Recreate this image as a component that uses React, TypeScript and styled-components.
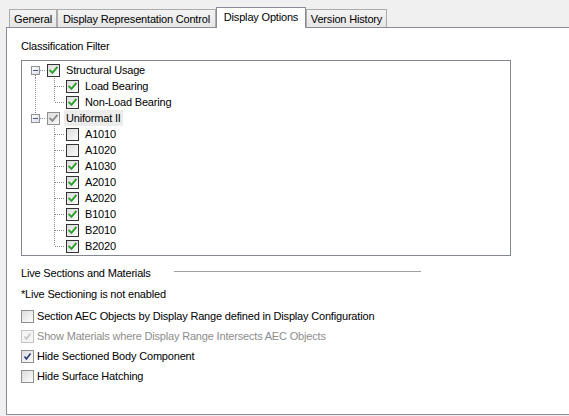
import React from 'react'
import styled, { createGlobalStyle } from 'styled-components'

const GlobalStyle = createGlobalStyle`
  html, body {
    margin: 0;
    padding: 0;
    background: #f0f0f0;
  }
  body {
    font-family: 'Liberation Sans', Arial, sans-serif;
    font-size: 11px;
    letter-spacing: -0.18px;
    color: #000;
  }
`

type TreeNode = {
  label: string
  level: number
  checked: boolean
  mixed?: boolean
  expander?: boolean
  selected?: boolean
  // which ancestor columns keep a vertical line going through this row
  rails: boolean[]
  first?: boolean
  last?: boolean
}

const tree: TreeNode[] = [
  { label: 'Structural Usage', level: 0, checked: true, expander: true, rails: [], first: true },
  { label: 'Load Bearing', level: 1, checked: true, rails: [true], first: true },
  { label: 'Non-Load Bearing', level: 1, checked: true, rails: [true], last: true },
  { label: 'Uniformat II', level: 0, checked: true, mixed: true, expander: true, selected: true, rails: [], last: true },
  { label: 'A1010', level: 1, checked: false, rails: [false], first: true },
  { label: 'A1020', level: 1, checked: false, rails: [false] },
  { label: 'A1030', level: 1, checked: true, rails: [false] },
  { label: 'A2010', level: 1, checked: true, rails: [false] },
  { label: 'A2020', level: 1, checked: true, rails: [false] },
  { label: 'B1010', level: 1, checked: true, rails: [false] },
  { label: 'B2010', level: 1, checked: true, rails: [false] },
  { label: 'B2020', level: 1, checked: true, rails: [false], last: true },
]

const tabs = [
  { label: 'General', width: 48 },
  { label: 'Display Representation Control', width: 159 },
  { label: 'Display Options', width: 90, active: true },
  { label: 'Version History', width: 81 },
]

const options = [
  { label: 'Section AEC Objects by Display Range defined in Display Configuration', checked: false },
  { label: 'Show Materials where Display Range Intersects AEC Objects', checked: true, disabled: true },
  { label: 'Hide Sectioned Body Component', checked: true },
  { label: 'Hide Surface Hatching', checked: false },
]

const Dots = '#8a8a8a'

const RailCell: React.FC<{ down: boolean; up: boolean; across: boolean; expander?: boolean }> = ({
  down,
  up,
  across,
  expander,
}) => (
  <RailBox>
    <svg width="19" height="16" viewBox="0 0 19 16">
      {up && <line x1="9.5" y1="0" x2="9.5" y2={expander ? 4 : 8} stroke={Dots} strokeDasharray="1 1" />}
      {down && <line x1="9.5" y1={expander ? 13 : 8} x2="9.5" y2="16" stroke={Dots} strokeDasharray="1 1" />}
      {across && (
        <line x1={expander ? 14 : 10} y1="8.5" x2="20" y2="8.5" stroke={Dots} strokeDasharray="1 1" />
      )}
      {expander && (
        <g>
          <rect x="5.5" y="4.5" width="8" height="8" fill="#fff" stroke="#919191" />
          <rect x="6" y="5" width="7" height="7" fill="url(#exp)" />
          <line x1="7" y1="8.5" x2="12" y2="8.5" stroke="#4a5a8a" />
        </g>
      )}
    </svg>
  </RailBox>
)

const TreeCheck: React.FC<{ checked: boolean; mixed?: boolean }> = ({ checked, mixed }) => (
  <TreeBox $mixed={mixed}>
    {checked && (
      <svg width="11" height="11" viewBox="0 0 11 11">
        <path
          d="M2.2 5.6 L4.4 7.8 L8.8 2.6"
          fill="none"
          stroke={mixed ? '#8c8c8c' : '#2ea02e'}
          strokeWidth="2"
          strokeLinecap="square"
        />
      </svg>
    )}
  </TreeBox>
)

const PlainCheck: React.FC<{ checked: boolean; disabled?: boolean }> = ({ checked, disabled }) => (
  <CheckBox $disabled={disabled}>
    {checked && (
      <svg width="11" height="11" viewBox="0 0 11 11">
        <path
          d="M2.5 5.5 L4.5 8 L8.5 2.5"
          fill="none"
          stroke={disabled ? '#c4c4c4' : '#23377a'}
          strokeWidth="1.6"
        />
      </svg>
    )}
  </CheckBox>
)

const App: React.FC = () => {
  return (
    <Frame>
      <GlobalStyle />
      <svg width="0" height="0" style={{ position: 'absolute' }}>
        <defs>
          <linearGradient id="exp" x1="0" y1="0" x2="1" y2="1">
            <stop offset="0" stopColor="#ffffff" />
            <stop offset="1" stopColor="#d8dce6" />
          </linearGradient>
        </defs>
      </svg>
      <TabStrip>
        {tabs.map((t) => (
          <Tab key={t.label} $active={t.active} $width={t.width}>
            {t.label}
          </Tab>
        ))}
      </TabStrip>
      <Panel>
        <Heading>Classification Filter</Heading>
        <TreeView>
          {tree.map((n) => (
            <TreeRow key={n.label}>
              {n.level === 0 ? (
                <RailCell up={!n.first} down={!n.last} across expander={n.expander} />
              ) : (
                <>
                  <RailCell up={n.rails[0]} down={n.rails[0]} across={false} />
                  <RailCell up down={!n.last} across />
                </>
              )}
              <TreeCheck checked={n.checked} mixed={n.mixed} />
              <TreeLabel $selected={n.selected}>{n.label}</TreeLabel>
            </TreeRow>
          ))}
        </TreeView>

        <GroupHeader>
          <span>Live Sections and Materials</span>
          <Rule />
        </GroupHeader>
        <Note>*Live Sectioning is not enabled</Note>
        <Options>
          {options.map((o) => (
            <OptionRow key={o.label} $disabled={o.disabled}>
              <PlainCheck checked={o.checked} disabled={o.disabled} />
              <span>{o.label}</span>
            </OptionRow>
          ))}
        </Options>
      </Panel>
    </Frame>
  )
}

const Frame = styled.div`
  width: 569px;
  height: 416px;
  box-sizing: border-box;
  padding: 7px 0 1px 6px;
  overflow: hidden;
  background: #f0f0f0;
  display: flex;
  flex-direction: column;
`

const TabStrip = styled.div`
  display: flex;
  align-items: flex-end;
  height: 21px;
  padding-left: 3px;
  margin-bottom: -1px;
  position: relative;
  z-index: 1;
`

const Tab = styled.div<{ $active?: boolean; $width: number }>`
  box-sizing: border-box;
  width: ${(p) => p.$width}px;
  height: ${(p) => (p.$active ? 21 : 18)}px;
  margin-bottom: ${(p) => (p.$active ? 0 : 1)}px;
  border: 1px solid ${(p) => (p.$active ? '#898c95' : '#acacac')};
  border-bottom: none;
  background: ${(p) => (p.$active ? '#fff' : 'linear-gradient(#f3f3f3, #e6e6e6)')};
  display: flex;
  align-items: center;
  justify-content: center;
  padding-bottom: ${(p) => (p.$active ? 3 : 0)}px;
  white-space: nowrap;
`

const Panel = styled.div`
  flex: 1;
  margin-right: -20px;
  background: #fff;
  border: 1px solid #898c95;
  padding: 10px 0 0 14px;
  display: flex;
  flex-direction: column;
  align-items: flex-start;
`

const Heading = styled.div`
  line-height: 16px;
`

const TreeView = styled.div`
  box-sizing: border-box;
  width: 490px;
  margin-top: 6px;
  border: 1px solid #828790;
  padding: 1px 0 1px 4px;
  display: flex;
  flex-direction: column;
`

const TreeRow = styled.div`
  display: flex;
  align-items: center;
  height: 16px;
`

const RailBox = styled.div`
  width: 19px;
  height: 16px;
  flex: none;
  svg {
    display: block;
  }
`

const TreeBox = styled.div<{ $mixed?: boolean }>`
  box-sizing: border-box;
  width: 13px;
  height: 13px;
  margin-left: 2px;
  flex: none;
  border: 1px solid ${(p) => (p.$mixed ? '#8e8f8f' : '#333')};
  background: linear-gradient(135deg, #dcdcdc, #fbfbfb);
  svg {
    display: block;
  }
`

const TreeLabel = styled.div<{ $selected?: boolean }>`
  margin-left: 4px;
  padding: 0 2px;
  line-height: 16px;
  background: ${(p) => (p.$selected ? '#ececec' : 'transparent')};
`

const GroupHeader = styled.div`
  width: 400px;
  margin-top: 9px;
  display: flex;
  align-items: center;
  line-height: 16px;
`

const Rule = styled.div`
  flex: 1;
  height: 1px;
  margin: 0 0 0 23px;
  position: relative;
  top: -2px;
  background: #a0a0a0;
`

const Note = styled.div`
  margin-top: 5px;
  line-height: 16px;
`

const Options = styled.div`
  margin-top: 4px;
  display: flex;
  flex-direction: column;
`

const OptionRow = styled.div<{ $disabled?: boolean }>`
  height: 20px;
  display: flex;
  align-items: center;
  gap: 3px;
  color: ${(p) => (p.$disabled ? '#8d8d8d' : '#000')};
`

const CheckBox = styled.div<{ $disabled?: boolean }>`
  box-sizing: border-box;
  width: 13px;
  height: 13px;
  flex: none;
  border: 1px solid ${(p) => (p.$disabled ? '#c5c5c5' : '#8e8f8f')};
  background: ${(p) => (p.$disabled ? '#f4f4f4' : 'linear-gradient(135deg, #dcdcdc, #fdfdfd)')};
  svg {
    display: block;
  }
`

export default App
